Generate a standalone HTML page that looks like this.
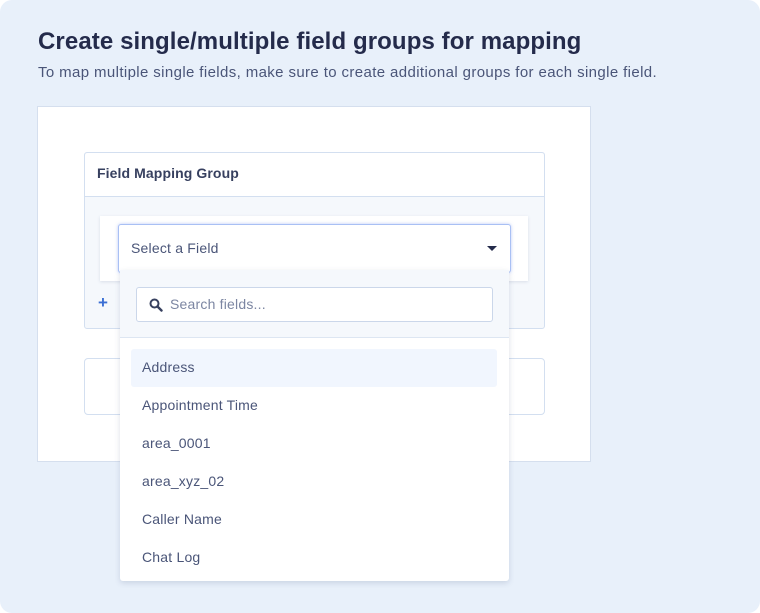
<!DOCTYPE html>
<html><head><style>
*{box-sizing:border-box;margin:0;padding:0}
body{width:760px;height:613px;background:#fff;font-family:"Liberation Sans",sans-serif;position:relative;overflow:hidden}
.bg{position:absolute;left:0;top:0;width:760px;height:613px;background:#e8f0fa;border-radius:12px}
h1{position:absolute;left:38px;top:28px;font-size:24px;font-weight:bold;color:#242b4b;letter-spacing:0.1px}
.sub{position:absolute;left:38px;top:64px;font-size:15px;color:#4a5578;letter-spacing:0.38px}
.panel{position:absolute;left:37px;top:106px;width:554px;height:356px;background:#fff;border:1px solid #d5dfee}
.grp{position:absolute;left:84px;top:152px;width:461px;height:177px;border:1px solid #d3dff0;border-radius:3px;background:#f5f8fc}
.gh{height:44px;background:#fff;border-bottom:1px solid #d3dff0;font-size:14px;font-weight:bold;color:#37405f;padding:12px 0 0 12px;border-radius:3px 3px 0 0;letter-spacing:0.1px}
.row{position:absolute;left:100px;top:216px;width:428px;height:65px;background:#fff;box-shadow:0 1px 3px rgba(60,80,120,.15)}
.sel{position:absolute;left:118px;top:224px;width:393px;height:49px;background:#fff;border:1px solid #a9c0f4;border-radius:3px;box-shadow:0 0 3px rgba(120,150,240,.5);font-size:14px;color:#4a5578;padding:15px 0 0 12px;letter-spacing:0.2px}
.caret{position:absolute;right:13px;top:21px;width:0;height:0;border-left:5px solid transparent;border-right:5px solid transparent;border-top:5px solid #242b4b}
.plus{position:absolute;left:98px;top:293px;color:#3b6fd4;font-size:17px;font-weight:bold}
.grp2{position:absolute;left:84px;top:358px;width:461px;height:57px;border:1px solid #d3dff0;border-radius:4px;background:#fff}
.dd{position:absolute;left:120px;top:270px;width:389px;height:311px;background:#fff;border-radius:3px;box-shadow:0 2px 6px rgba(60,80,120,.18)}
.sa{height:68px;background:#f5f8fc;border-bottom:1px solid #dde6f2;position:relative}
.si{position:absolute;left:16px;top:17px;width:357px;height:35px;background:#fff;border:1px solid #cbd7ea;border-radius:3px;font-size:14px;color:#7c86a2;padding:8px 0 0 33px;letter-spacing:0.2px}
.si svg{position:absolute;left:12px;top:10px}
.it{position:absolute;left:11px;width:366px;height:38px;font-size:14px;color:#4a5578;padding:10px 0 0 11px;border-radius:3px;letter-spacing:0.2px}
</style></head><body>
<div class="bg"></div>
<h1>Create single/multiple field groups for mapping</h1>
<div class="sub">To map multiple single fields, make sure to create additional groups for each single field.</div>
<div class="panel"></div>
<div class="grp"><div class="gh">Field Mapping Group</div></div>
<div class="row"></div>
<div class="plus">+</div>
<div class="grp2"></div>
<div class="sel">Select a Field<div class="caret"></div></div>
<div class="dd">
<div class="sa"><div class="si"><svg width="14" height="14" viewBox="0 0 14 14"><circle cx="5.5" cy="5.5" r="4" fill="none" stroke="#37405f" stroke-width="2"/><path d="M8.5 8.5L12.5 12.5" stroke="#37405f" stroke-width="2.4" stroke-linecap="round"/></svg>Search fields...</div></div>
<div class="it" style="top:79px;background:#f1f6fe">Address</div>
<div class="it" style="top:117px">Appointment Time</div>
<div class="it" style="top:155px">area_0001</div>
<div class="it" style="top:193px">area_xyz_02</div>
<div class="it" style="top:231px">Caller Name</div>
<div class="it" style="top:269px">Chat Log</div>
</div>
</body></html>
